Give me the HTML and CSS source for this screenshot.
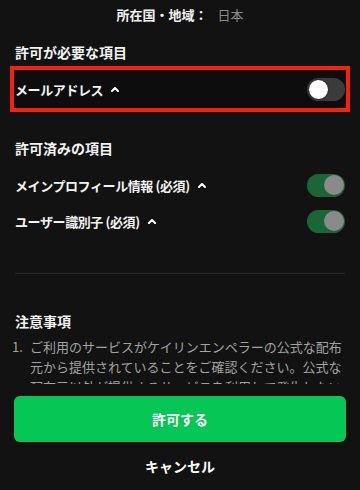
FILE: index.html
```html
<!DOCTYPE html>
<html lang="ja">
<head>
<meta charset="utf-8">
<link rel="stylesheet" href="styles.css">
</head>
<body>
<div class="page">
  <div class="scroll">
    <div class="region">
      <span class="region-label">所在国・地域：</span><span class="region-value">日本</span>
    </div>

    <h2 class="section-title first">許可が必要な項目</h2>
    <div class="perm-row highlight">
      <span class="perm-label">メールアドレス<svg class="chev" width="8" height="6" viewBox="0 0 8 6"><polyline points="1,5 4,2 7,5" fill="none" stroke="#fff" stroke-width="2" stroke-linecap="round" stroke-linejoin="round"/></svg></span>
      <span class="toggle off"><span class="knob"></span></span>
    </div>

    <h2 class="section-title second">許可済みの項目</h2>
    <div class="perm-list">
      <div class="perm-row">
        <span class="perm-label">メインプロフィール情報 (必須)<svg class="chev" width="8" height="6" viewBox="0 0 8 6"><polyline points="1,5 4,2 7,5" fill="none" stroke="#fff" stroke-width="2" stroke-linecap="round" stroke-linejoin="round"/></svg></span>
        <span class="toggle on"><span class="knob"></span></span>
      </div>
      <div class="perm-row">
        <span class="perm-label">ユーザー識別子 (必須)<svg class="chev" width="8" height="6" viewBox="0 0 8 6"><polyline points="1,5 4,2 7,5" fill="none" stroke="#fff" stroke-width="2" stroke-linecap="round" stroke-linejoin="round"/></svg></span>
        <span class="toggle on"><span class="knob"></span></span>
      </div>
    </div>

    <hr class="divider">

    <h2 class="section-title notes-title">注意事項</h2>
    <div class="note-item">
      <span class="note-num">1.</span>
      <p class="note-text">ご利用のサービスがケイリンエンペラーの公式な配布元から提供されていることをご確認ください。公式な配布元以外が提供するサービスを利用して発生したいかなる損害についても、当社は一切の責任を負いません。</p>
    </div>
  </div>

  <div class="footer">
    <button class="btn-allow">許可する</button>
    <div class="btn-cancel">キャンセル</div>
  </div>
</div>
</body>
</html>
```

FILE: styles.css
```css
* { box-sizing: border-box; }

html, body {
  margin: 0;
  padding: 0;
  background: #121212;
}

body {
  font-family: "Noto Sans CJK JP", "Noto Sans", sans-serif;
  color: #fff;
  width: 360px;
  height: 490px;
  overflow: hidden;
}

.page {
  display: flex;
  flex-direction: column;
  height: 490px;
}

.scroll {
  height: 384px;
  flex: none;
  overflow: hidden;
  padding: 0 15px;
}

.region {
  height: 30px;
  display: flex;
  justify-content: center;
  align-items: center;
  font-size: 13px;
  line-height: 30px;
}

.region-label {
  font-weight: 700;
  color: #f2f2f2;
}

.region-value {
  color: #8c8c8c;
  margin-left: 10px;
}

.section-title {
  margin: 0;
  font-size: 14px;
  line-height: 20px;
  font-weight: 700;
  color: #f2f2f2;
}

.section-title.first { margin-top: 12px; }
.section-title.second { margin-top: 26px; }
.section-title.notes-title { margin-top: 37px; }

.perm-row {
  display: flex;
  align-items: center;
  justify-content: space-between;
  height: 36px;
}

.perm-row.highlight {
  height: 46px;
  margin: 4px -5px 0;
  padding: 0 1px;
  border: 4px solid #f4210c;
  background: #0d0d0d;
}

.perm-list {
  margin-top: 9px;
  display: flex;
  flex-direction: column;
}

.perm-label {
  font-size: 13px;
  font-weight: 700;
  letter-spacing: -0.4px;
  color: #f2f2f2;
  display: flex;
  align-items: center;
}

.chev {
  margin-left: 8px;
  margin-top: -1px;
}

.toggle {
  width: 38px;
  height: 23px;
  border-radius: 12px;
  display: flex;
  align-items: center;
  padding: 0 1px;
  flex: none;
}

.toggle.off {
  background: #3b3b3b;
  justify-content: flex-start;
}

.toggle.on {
  background: #1b6636;
  justify-content: flex-end;
}

.knob {
  width: 21px;
  height: 21px;
  border-radius: 50%;
}

.toggle.off .knob {
  background: #fff;
  border: 1px solid #1a1a1a;
}

.toggle.on .knob {
  background: #8a8a8a;
  width: 20px;
  height: 20px;
}

.divider {
  border: 0;
  border-top: 1px solid #2a2a2a;
  margin: 34px 0 0;
  height: 0;
}

.note-item {
  display: grid;
  grid-template-columns: 18px 1fr;
  margin-top: 6px;
  margin-left: -3px;
  font-size: 13px;
  line-height: 20px;
  color: #a3a3a3;
}

.note-num {
  display: block;
}

.note-text {
  margin: 0;
}

.footer {
  padding: 12px 14px 0;
  display: flex;
  flex-direction: column;
  align-items: stretch;
}

.btn-allow {
  height: 46px;
  border: 0;
  border-radius: 6px;
  background: #06c755;
  color: #fff;
  font-family: inherit;
  font-size: 14px;
  font-weight: 700;
  padding: 0;
}

.btn-cancel {
  margin-top: 14px;
  text-align: center;
  font-size: 14px;
  line-height: 20px;
  font-weight: 700;
  color: #fff;
}
```
